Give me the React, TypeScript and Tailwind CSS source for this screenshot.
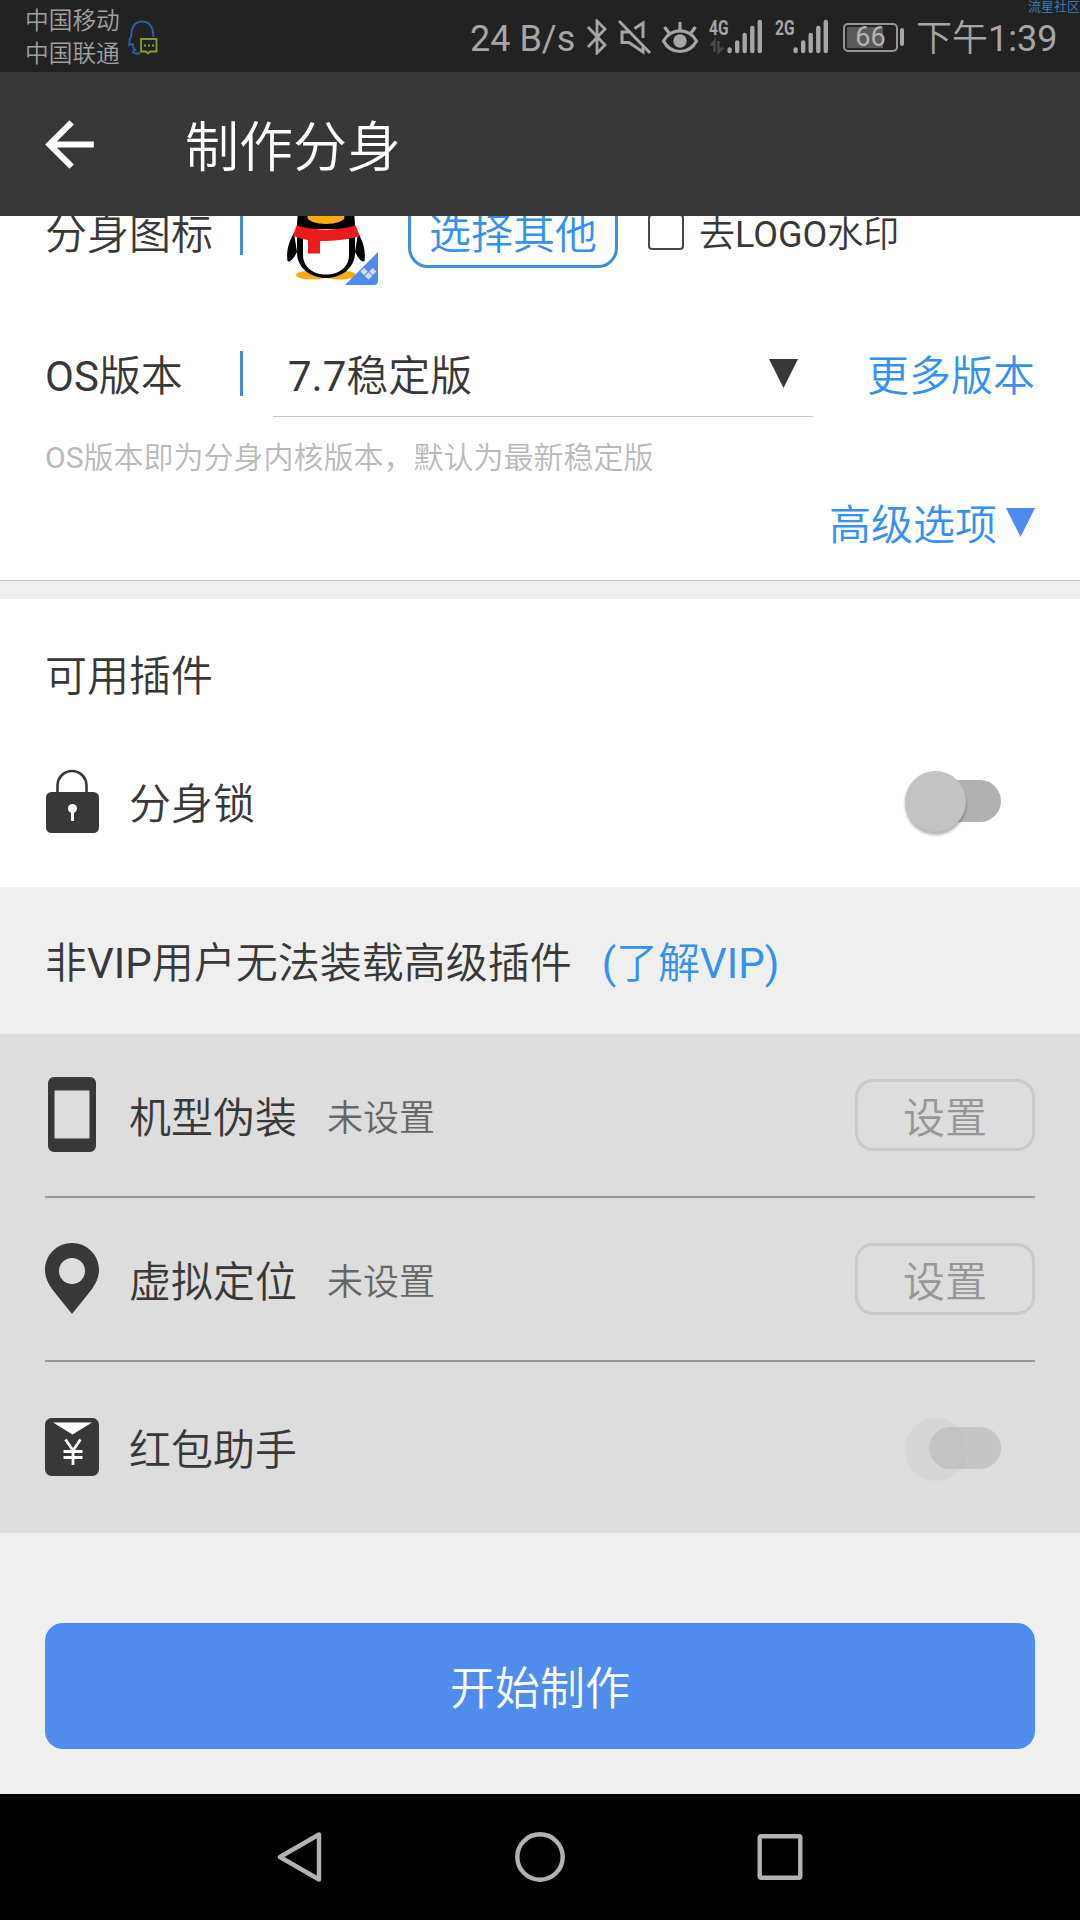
import React from 'react';

interface SignalProps {
    label: string;
    className?: string;
    arrows?: boolean;
}

const Signal: React.FC<SignalProps> = ({ label, className = '', arrows = false }) => (
    <div className={`relative h-[36px] w-[54px] shrink-0 ${className}`}>
        <span className="absolute left-0 top-0 origin-left scale-x-[0.74] text-[21px] leading-[18px] font-bold">{label}</span>
        <svg className="h-[36px] w-[54px]" viewBox="0 0 54 36" fill="none">
            {arrows && <path d="M2 26.5L5.5 22v11M9.500 22v11l4.500-4.500" stroke="#484848" strokeWidth={2.6} />}
            <path d="M20.600 30.500v1.500M28.200 23.500v8.500M35.700 16v16M43.300 9v23M50.800 3v29" stroke="currentColor" strokeWidth={4.4} strokeLinecap="round" />
        </svg>
    </div>
);

const StatusBar: React.FC = () => (
    <div className="relative flex h-[72px] items-center bg-[#222222] pl-[25px] pt-[2px] text-[#a6a6a6]">
        <div className="w-[103px] pt-[2px] text-[23.700px] leading-[33px] text-[#a0a0a0]">
            <div>中国移动</div>
            <div>中国联通</div>
        </div>
        <svg className="h-[36px] w-[32px]" viewBox="0 0 32 36" fill="none">
            <path d="M25.300 18C25.500 9 22 2.600 14.300 2.600S2.800 9 3.300 17C1.500 19.500 1 22 1.200 26l3.500-1c-.2 3 .8 4.500 2.300 6-3 1-3 3.500 1.500 3.500H12" stroke="#2862a2" strokeWidth={2} />
            <path d="M13 20h15.500v12.500H22l-2 2-2-2h-5z" stroke="#83a12f" strokeWidth={1.800} />
            <path d="M16 26.500h2M20 26.500h2M24 26.500h2" stroke="#83a12f" strokeWidth={2} />
        </svg>

        <span className="ml-[310px] w-[115px] whitespace-nowrap pt-[3px] text-[36px] leading-none">24 B/s</span>

        {/* Bluetooth */}
        <svg className="h-[36px] w-[24px]" viewBox="0 0 24 36" fill="none" stroke="currentColor" strokeWidth={2.8}>
            <path d="M3 8l17 18-8 8V2l8 8L3 28" />
        </svg>
        {/* Muted speaker */}
        <svg className="ml-[9px] h-[36px] w-[36px]" viewBox="0 0 36 36" fill="none" stroke="currentColor" strokeWidth={3}>
            <path d="M1 2l31 32" />
            <path d="M11 13H4v10.500h7L25 33v-5M16.500 9.500L25 4v15" />
        </svg>
        {/* Eye comfort */}
        <svg className="ml-[7px] h-[36px] w-[38px]" viewBox="0 0 38 36" fill="none" stroke="currentColor" strokeWidth={3.2}>
            <path d="M2.500 22C10 8.500 28 8.500 35.500 22 28 36 10 36 2.500 22z" />
            <path d="M19 11V3M8 14L3.500 8M30 14l4.500-6" />
            <circle cx="19" cy="22" r="6.700" fill="currentColor" stroke="none" />
        </svg>

        <Signal label="4G" arrows className="ml-[10px]" />
        <Signal label="2G" className="ml-[12px]" />

        <div className="ml-[14px] flex h-[29px] w-[55px] items-center justify-center rounded-[5px] border-2 border-[#969696] bg-[linear-gradient(to_right,#5a5a5a_36px,transparent_36px)] bg-origin-content bg-clip-content p-[2px]">
            <span className="text-[27px] leading-none text-[#b4b4b4]">66</span>
        </div>
        <div className="ml-[2px] h-[18px] w-[4px] rounded-full bg-[#a6a6a6]" />
        <span className="ml-[12px] whitespace-nowrap pt-[3px] text-[36px] leading-none">下午1:39</span>

        <span className="absolute right-0 top-0 whitespace-nowrap text-[13px] leading-[13px] text-[#3484c0]">流星社区</span>
    </div>
);

const AppBar: React.FC = () => (
    <header className="flex h-[144px] items-center bg-[#383838] pl-[33px] text-white">
        <svg className="size-[73px]" viewBox="0 0 24 24" fill="currentColor">
            <path d="M20 11H7.830l5.590-5.590L12 4l-8 8 8 8 1.410-1.410L7.830 13H20v-2z" />
        </svg>
        <h1 className="ml-[79px] pt-[9px] text-[54px] leading-none">制作分身</h1>
    </header>
);

const PenguinIcon: React.FC = () => (
    <svg className="h-[106px] w-[96px] shrink-0" viewBox="0 0 96 106">
        <path d="M14 50C14 18 24 4 43 4s29 14 29 46z" />
        <ellipse cx="29" cy="96" rx="16" ry="4.500" fill="#fbab12" />
        <ellipse cx="57" cy="96" rx="16" ry="4.500" fill="#fbab12" />
        <path d="M11 54C6 62 3 72 4.500 82c3 2 7-4 9.500-9zM75 54c5 8 8 18 6.500 28-3 2-7-4-9.500-9z" />
        <path d="M14 54h58v20c0 15-14 25-29 25S14 89 14 74z" />
        <path d="M20 60h46v16c0 12-10 19.500-23 19.500S20 88 20 76z" fill="#fff" />
        <ellipse cx="43" cy="38" rx="18.500" ry="7" fill="#fbab12" />
        <path d="M13.500 46.500c18 5.500 41 5.500 59 0L77 57c-11 3.500-24 5-40 5v12.500H25V61c-6-1-11-2.500-15-4.500z" fill="#eb1c1c" />
        <path d="M95 73v29q0 4-4 4H62z" fill="#4f8bed" />
        <g fill="#dcd8f5">
            <rect x="-2.600" y="-2.600" width="5.200" height="5.200" rx="0.500" transform="translate(81 92.500) rotate(45)" />
            <rect x="-2.600" y="-2.600" width="5.200" height="5.200" rx="0.500" transform="translate(89.800 92.500) rotate(45)" />
            <rect x="-2.600" y="-2.600" width="5.200" height="5.200" rx="0.500" transform="translate(85.400 96.900) rotate(45)" />
        </g>
    </svg>
);

const LockIcon = () => (
    <svg className="h-[64px] w-[54px]" viewBox="0 0 54 64">
        <path d="M12.500 26V16.500a14.500 14.500 0 0 1 29 0V26" fill="none" stroke="#383838" strokeWidth={2.6} />
        <rect x="1" y="23" width="53" height="41" rx="5.500" fill="#383838" />
        <circle cx="27.500" cy="39.500" r="4.500" fill="#fff" />
        <path d="M26 40h3v12h-3z" fill="#fff" />
    </svg>
);

const PhoneIcon = () => (
    <svg className="-mt-[2px] h-[75px] w-[54px]" viewBox="0 0 54 75">
        <path fillRule="evenodd" d="M9 0h36a6 6 0 0 1 6 6v63a6 6 0 0 1-6 6H9a6 6 0 0 1-6-6V6a6 6 0 0 1 6-6zM9.500 13.500v48h35v-48z" fill="#383838" />
    </svg>
);

const PinIcon = () => (
    <svg className="-mt-[2px] h-[71px] w-[54px]" viewBox="0 0 54 71">
        <path fillRule="evenodd" d="M27 0C12 0 0 12 0 27c0 7 3 13 7 19l20 25 20-25c4-6 7-12 7-19C54 12 42 0 27 0zM27 15a13 13 0 1 1 0 26 13 13 0 0 1 0-26z" fill="#383838" />
    </svg>
);

const RedPacketIcon = () => (
    <svg className="-mt-[2px] h-[58px] w-[54px]" viewBox="0 0 54 58">
        <rect width="54" height="58" rx="6.500" fill="#383838" />
        <path d="M8 4.500h39L27.500 16.500z" fill="#fff" />
        <path d="M20.500 21.500l7.500 11 7.500-11M28 32v15M18.500 33.500h19M18.500 39.500h19" fill="none" stroke="#fff" strokeWidth={2.8} />
    </svg>
);

const Toggle: React.FC<{ disabled?: boolean }> = ({ disabled = false }) => (
    <div className="relative mr-[34px] flex h-[60px] w-[96px] items-center justify-end">
        <div className={`h-[42px] w-[72px] rounded-full ${disabled ? 'bg-[#c5c5c5]' : 'bg-[#b1b1b1]'}`} />
        <div
            className={`absolute left-0 top-0 size-[61px] rounded-full ${
                disabled ? 'bg-[#bebebe]/20 shadow-[0_2px_2px_rgba(0,0,0,0.03)]' : 'bg-[#c3c3c3] shadow-[0_3px_3px_rgba(0,0,0,0.3)]'
            }`}
        />
    </div>
);

interface PluginRowProps {
    icon: React.ReactNode;
    name: string;
    status?: string;
    className: string;
    children: React.ReactNode;
}

const PluginRow: React.FC<PluginRowProps> = ({ icon, name, status, className, children }) => (
    <div className={`flex items-center ${className}`}>
        {icon}
        <span className="ml-[30px] pt-[7px] text-[42px] leading-none">{name}</span>
        {status && <span className="ml-[30px] pt-[7px] text-[36px] leading-none text-[#666666]">{status}</span>}
        <div className="ml-auto">{children}</div>
    </div>
);

const SettingButton = () => (
    <button className="block h-[72px] w-[180px] rounded-[18px] border-[3px] border-[#cacaca] pt-[7px] text-[42px] leading-none text-[#979797]">设置</button>
);

const App: React.FC = () => {
    return (
        <div className="flex h-[1920px] w-[1080px] flex-col overflow-hidden bg-[#efefef] font-[Roboto,'Noto_Sans_CJK_SC_DemiLight','Noto_Sans_CJK_SC',sans-serif] text-[#383838]">
            <StatusBar />
            <AppBar />

            {/* Clone settings, scrolled partly under the app bar */}
            <section className="h-[365px] overflow-hidden border-b border-[#c6c6c6] bg-white px-[45px]">
                <div className="-mt-[20px] flex h-[72px] items-center">
                    <span className="w-[195px] pt-[6px] text-[42px] leading-none">分身图标</span>
                    <div className="mr-[40px] h-[45px] w-[3px] bg-[#3f8fdc]" />
                    <PenguinIcon />
                    <button className="ml-[29px] h-[72px] w-[210px] rounded-[20px] border-[3px] border-[#3f8ddf] pt-[6px] text-[42px] leading-none text-[#3591ee]">选择其他</button>
                    <div className="ml-[30px] size-[36px] rounded-[4px] border-2 border-[#484848]" />
                    <span className="ml-[15px] pt-[5px] text-[36px] leading-none">去LOGO水印</span>
                </div>

                <div className="mt-[66px] flex h-[83px] items-start">
                    <span className="w-[195px] pt-[22px] text-[42px] leading-none">OS版本</span>
                    <div className="mt-[17px] h-[45px] w-[3px] bg-[#3f8fdc]" />
                    <div className="ml-[30px] flex h-[83px] w-[540px] items-start justify-between border-b border-[#c6c6c6] pl-[15px] pr-[15px]">
                        <span className="pt-[22px] text-[42px] leading-none">7.7稳定版</span>
                        <svg className="mt-[25px] h-[29px] w-[29px]" viewBox="0 0 29 29">
                            <path d="M0 0h29L14.500 29z" fill="#383838" />
                        </svg>
                    </div>
                    <span className="ml-auto pt-[22px] text-[42px] leading-none text-[#3591ee]">更多版本</span>
                </div>

                <p className="mt-[26px] text-[30px] leading-[30px] text-[#b9b9b9]">OS版本即为分身内核版本，默认为最新稳定版</p>

                <div className="mt-[29px] flex items-start justify-end text-[#3591ee]">
                    <span className="pt-[3px] text-[42px] leading-none">高级选项</span>
                    <svg className="ml-[9px] mt-[6px] h-[29px] w-[29px]" viewBox="0 0 29 29">
                        <path d="M0 0h29L14.500 29z" fill="#4f8bed" />
                    </svg>
                </div>
            </section>

            <section className="mt-[18px] h-[288px] bg-white px-[45px] pt-[57px]">
                <h2 className="text-[42px] leading-none">可用插件</h2>
                <PluginRow icon={<LockIcon />} name="分身锁" className="mt-[37px] h-[132px]">
                    <Toggle />
                </PluginRow>
            </section>

            <div className="flex h-[147px] items-center px-[45px] pt-[6px] text-[42px] leading-none">
                <span>非VIP用户无法装载高级插件</span>
                <a className="ml-[30px] text-[#3591ee]">(了解VIP)</a>
            </div>

            <section className="h-[499px] bg-[#dddddd] px-[45px]">
                <PluginRow icon={<PhoneIcon />} name="机型伪装" status="未设置" className="h-[164px] border-b-2 border-[#999999]">
                    <SettingButton />
                </PluginRow>
                <PluginRow icon={<PinIcon />} name="虚拟定位" status="未设置" className="h-[164px] border-b-2 border-[#999999]">
                    <SettingButton />
                </PluginRow>
                <PluginRow icon={<RedPacketIcon />} name="红包助手" className="h-[171px]">
                    <Toggle disabled />
                </PluginRow>
            </section>

            <div className="h-[261px] px-[45px] pt-[90px]">
                <button className="h-[126px] w-full rounded-[18px] bg-[#508cee] pt-[6px] text-[45px] leading-none text-white">开始制作</button>
            </div>

            {/* System navigation */}
            <nav className="flex h-[126px] items-center justify-center gap-[190px] bg-black">
                <svg className="size-[50px]" viewBox="0 0 50 50" fill="none" stroke="#b2b2b2" strokeWidth={4.4} strokeLinejoin="round">
                    <path d="M5 25L44 2.500v45z" />
                </svg>
                <svg className="size-[50px]" viewBox="0 0 50 50" fill="none" stroke="#b2b2b2" strokeWidth={4.4}>
                    <circle cx="25" cy="25" r="22.700" />
                </svg>
                <svg className="size-[50px]" viewBox="0 0 50 50" fill="none" stroke="#b2b2b2" strokeWidth={4.4}>
                    <rect x="4.700" y="4.200" width="40.600" height="41.600" rx="1.500" />
                </svg>
            </nav>
        </div>
    );
};

export default App;
